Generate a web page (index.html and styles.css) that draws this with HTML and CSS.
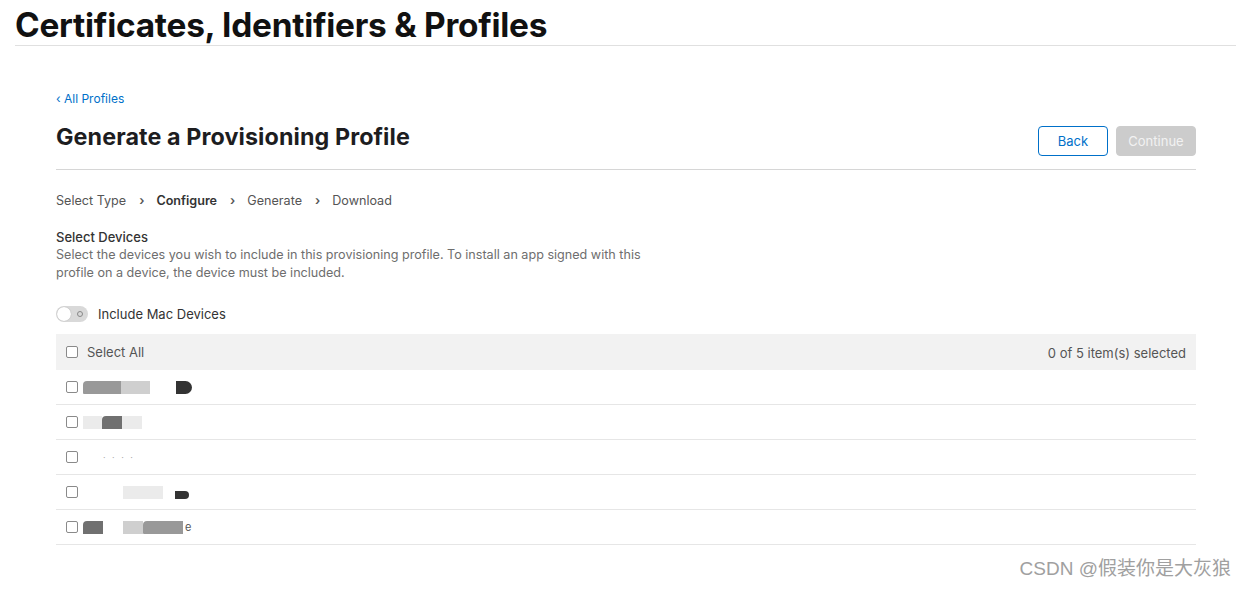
FILE: index.html
```html
<!DOCTYPE html>
<html>
<head>
<meta charset="utf-8">
<link rel="stylesheet" href="styles.css">
</head>
<body>
<header class="top">
  <h1 class="site-title">Certificates, Identifiers &amp; Profiles</h1>
</header>
<main class="content">
  <a class="back-link" href="#">‹ All Profiles</a>
  <div class="title-row">
    <h2 class="page-title">Generate a Provisioning Profile</h2>
    <div class="actions">
      <button class="btn btn-back">Back</button>
      <button class="btn btn-continue" disabled>Continue</button>
    </div>
  </div>
  <nav class="steps">
    <span>Select Type</span><span class="chev">›</span>
    <span class="current">Configure</span><span class="chev">›</span>
    <span>Generate</span><span class="chev">›</span>
    <span>Download</span>
  </nav>
  <section class="devices">
    <h3 class="sec-title">Select Devices</h3>
    <p class="sec-desc">Select the devices you wish to include in this provisioning profile. To install an app signed with this profile on a device, the device must be included.</p>
    <div class="toggle-row">
      <span class="toggle"><span class="knob"></span><span class="o"></span></span>
      <span>Include Mac Devices</span>
    </div>
    <div class="table">
      <div class="thead">
        <label class="cell"><span class="cb"></span>Select All</label>
        <span class="count">0 of 5 item(s) selected</span>
      </div>
      <div class="row"><span class="cb"></span><span class="blur"><i class="b1" style="width:38px"></i><i class="b2" style="width:29px"></i><i class="gap" style="width:26px"></i><i class="b4" style="width:16px"></i></span></div>
      <div class="row"><span class="cb"></span><span class="blur"><i class="b3" style="width:19px"></i><i class="b1d" style="width:20px"></i><i class="b3" style="width:20px"></i></span></div>
      <div class="row"><span class="cb"></span><span class="blur"><span class="faint">· · · ·</span></span></div>
      <div class="row"><span class="cb"></span><span class="blur"><i class="gap" style="width:40px"></i><i class="b3" style="width:40px"></i><i class="gap" style="width:12px"></i><i class="b4s" style="width:14px"></i></span></div>
      <div class="row"><span class="cb"></span><span class="blur"><i class="b1d" style="width:20px"></i><i class="gap" style="width:20px"></i><i class="b2" style="width:20px"></i><i class="b1" style="width:40px"></i><span class="tiny">e</span></span></div>
    </div>
  </section>
</main>
<div class="watermark">CSDN @假装你是大灰狼</div>
</body>
</html>
```
FILE: styles.css
```css
* { box-sizing: border-box; }
html, body { margin: 0; padding: 0; background: #fff; }
body {
  font-family: Inter, "Noto Sans", "Noto Sans CJK SC", sans-serif;
  color: #1d1d1f;
  width: 1247px;
  height: 589px;
  overflow: hidden;
  position: relative;
}
.top {
  margin: 0 11px 0 15px;
  border-bottom: 1px solid #e0e0e0;
  height: 46px;
}
.site-title {
  margin: 0;
  padding-top: 5px;
  font-size: 33.4px;
  font-weight: 700;
  letter-spacing: -0.25px;
  line-height: 40px;
  color: #111;
}
.content {
  margin: 0 51px 0 56px;
  padding-top: 45px;
}
.back-link {
  display: block;
  font-size: 12px;
  line-height: 16px;
  color: #0070c9;
  text-decoration: none;
}
.title-row {
  display: flex;
  justify-content: space-between;
  align-items: flex-start;
  border-bottom: 1px solid #d6d6d6;
  height: 63px;
  padding-top: 15px;
}
.page-title {
  margin: 0;
  font-size: 23.3px;
  font-weight: 700;
  line-height: 30px;
  color: #1d1d1f;
  letter-spacing: 0.1px;
}
.actions { display: flex; gap: 8px; padding-top: 4px; }
.btn {
  font-family: inherit;
  font-size: 13px;
  height: 30px;
  border-radius: 4px;
  padding: 0;
}
.btn-back {
  width: 70px;
  background: #fff;
  color: #0070c9;
  border: 1px solid #0070c9;
}
.btn-continue {
  width: 80px;
  background: #cccccc;
  color: #f2f2f2;
  border: 1px solid #cccccc;
}
.steps {
  display: flex;
  align-items: center;
  font-size: 12.6px;
  color: #555;
  margin-top: 23px;
  line-height: 16px;
}
.steps .current { font-weight: 600; color: #333; }
.steps .chev { margin: 0 12px 0 13px; color: #555; font-weight: 600; }
.devices { margin-top: 20px; }
.sec-title {
  margin: 0;
  font-size: 13px;
  font-weight: 500;
  line-height: 16px;
  color: #333;
}
.sec-desc {
  margin: 1px 0 0;
  width: 620px;
  font-size: 12.6px;
  line-height: 18px;
  color: #6e6e6e;
}
.toggle-row {
  display: flex;
  align-items: center;
  gap: 10px;
  margin-top: 24px;
  font-size: 13px;
  color: #333;
}
.toggle {
  position: relative;
  width: 32px;
  height: 16px;
  border-radius: 8px;
  background: #d9d9d9;
}
.toggle .knob {
  position: absolute;
  left: 1px; top: 1px;
  width: 14px; height: 14px;
  border-radius: 50%;
  background: #fff;
  box-shadow: 0 0 1px rgba(0,0,0,.3);
}
.toggle .o {
  position: absolute;
  left: 21px; top: 5px;
  width: 6px; height: 6px;
  border: 1px solid #888;
  border-radius: 50%;
}
.table { margin-top: 12px; }
.thead {
  display: flex;
  justify-content: space-between;
  align-items: center;
  height: 36px;
  background: #f2f2f2;
  padding: 0 10px;
  font-size: 13px;
  color: #555;
}
.thead .cell { display: flex; align-items: center; gap: 9px; }
.thead .count { padding-top: 2px; }
.cb {
  display: inline-block;
  width: 12px;
  height: 12px;
  border: 1px solid #8a8a8a;
  border-radius: 2px;
  background: #fff;
  flex: none;
}
.row {
  display: flex;
  align-items: center;
  gap: 5px;
  height: 35px;
  padding-left: 10px;
  border-bottom: 1px solid #e6e6e6;
}
.blur { display: flex; align-items: center; height: 14px; }
.blur i { display: block; height: 13px; }
.b1 { background: #999; border-radius: 4px 0 0 1px; }
.b1d { background: #707070; border-radius: 4px 0 0 0; }
.b2 { background: #cfcfcf; }
.b3 { background: #ebebeb; }
.b4 { background: #333; border-radius: 0 7px 7px 0; }
.b4s { background: #333; border-radius: 0 6px 6px 0; height: 8px !important; margin-top: 6px; }
.gap { background: transparent; }
.faint { font-size: 9px; color: #aaa; letter-spacing: 2px; padding-left: 20px; }
.tiny { font-size: 11px; color: #555; padding-left: 2px; }
.watermark {
  position: absolute;
  right: 16px;
  top: 555px;
  font-size: 19px;
  line-height: 28px;
  color: #a0a0a0;
  font-family: "Liberation Sans", "Noto Sans CJK SC", sans-serif;
}
```
